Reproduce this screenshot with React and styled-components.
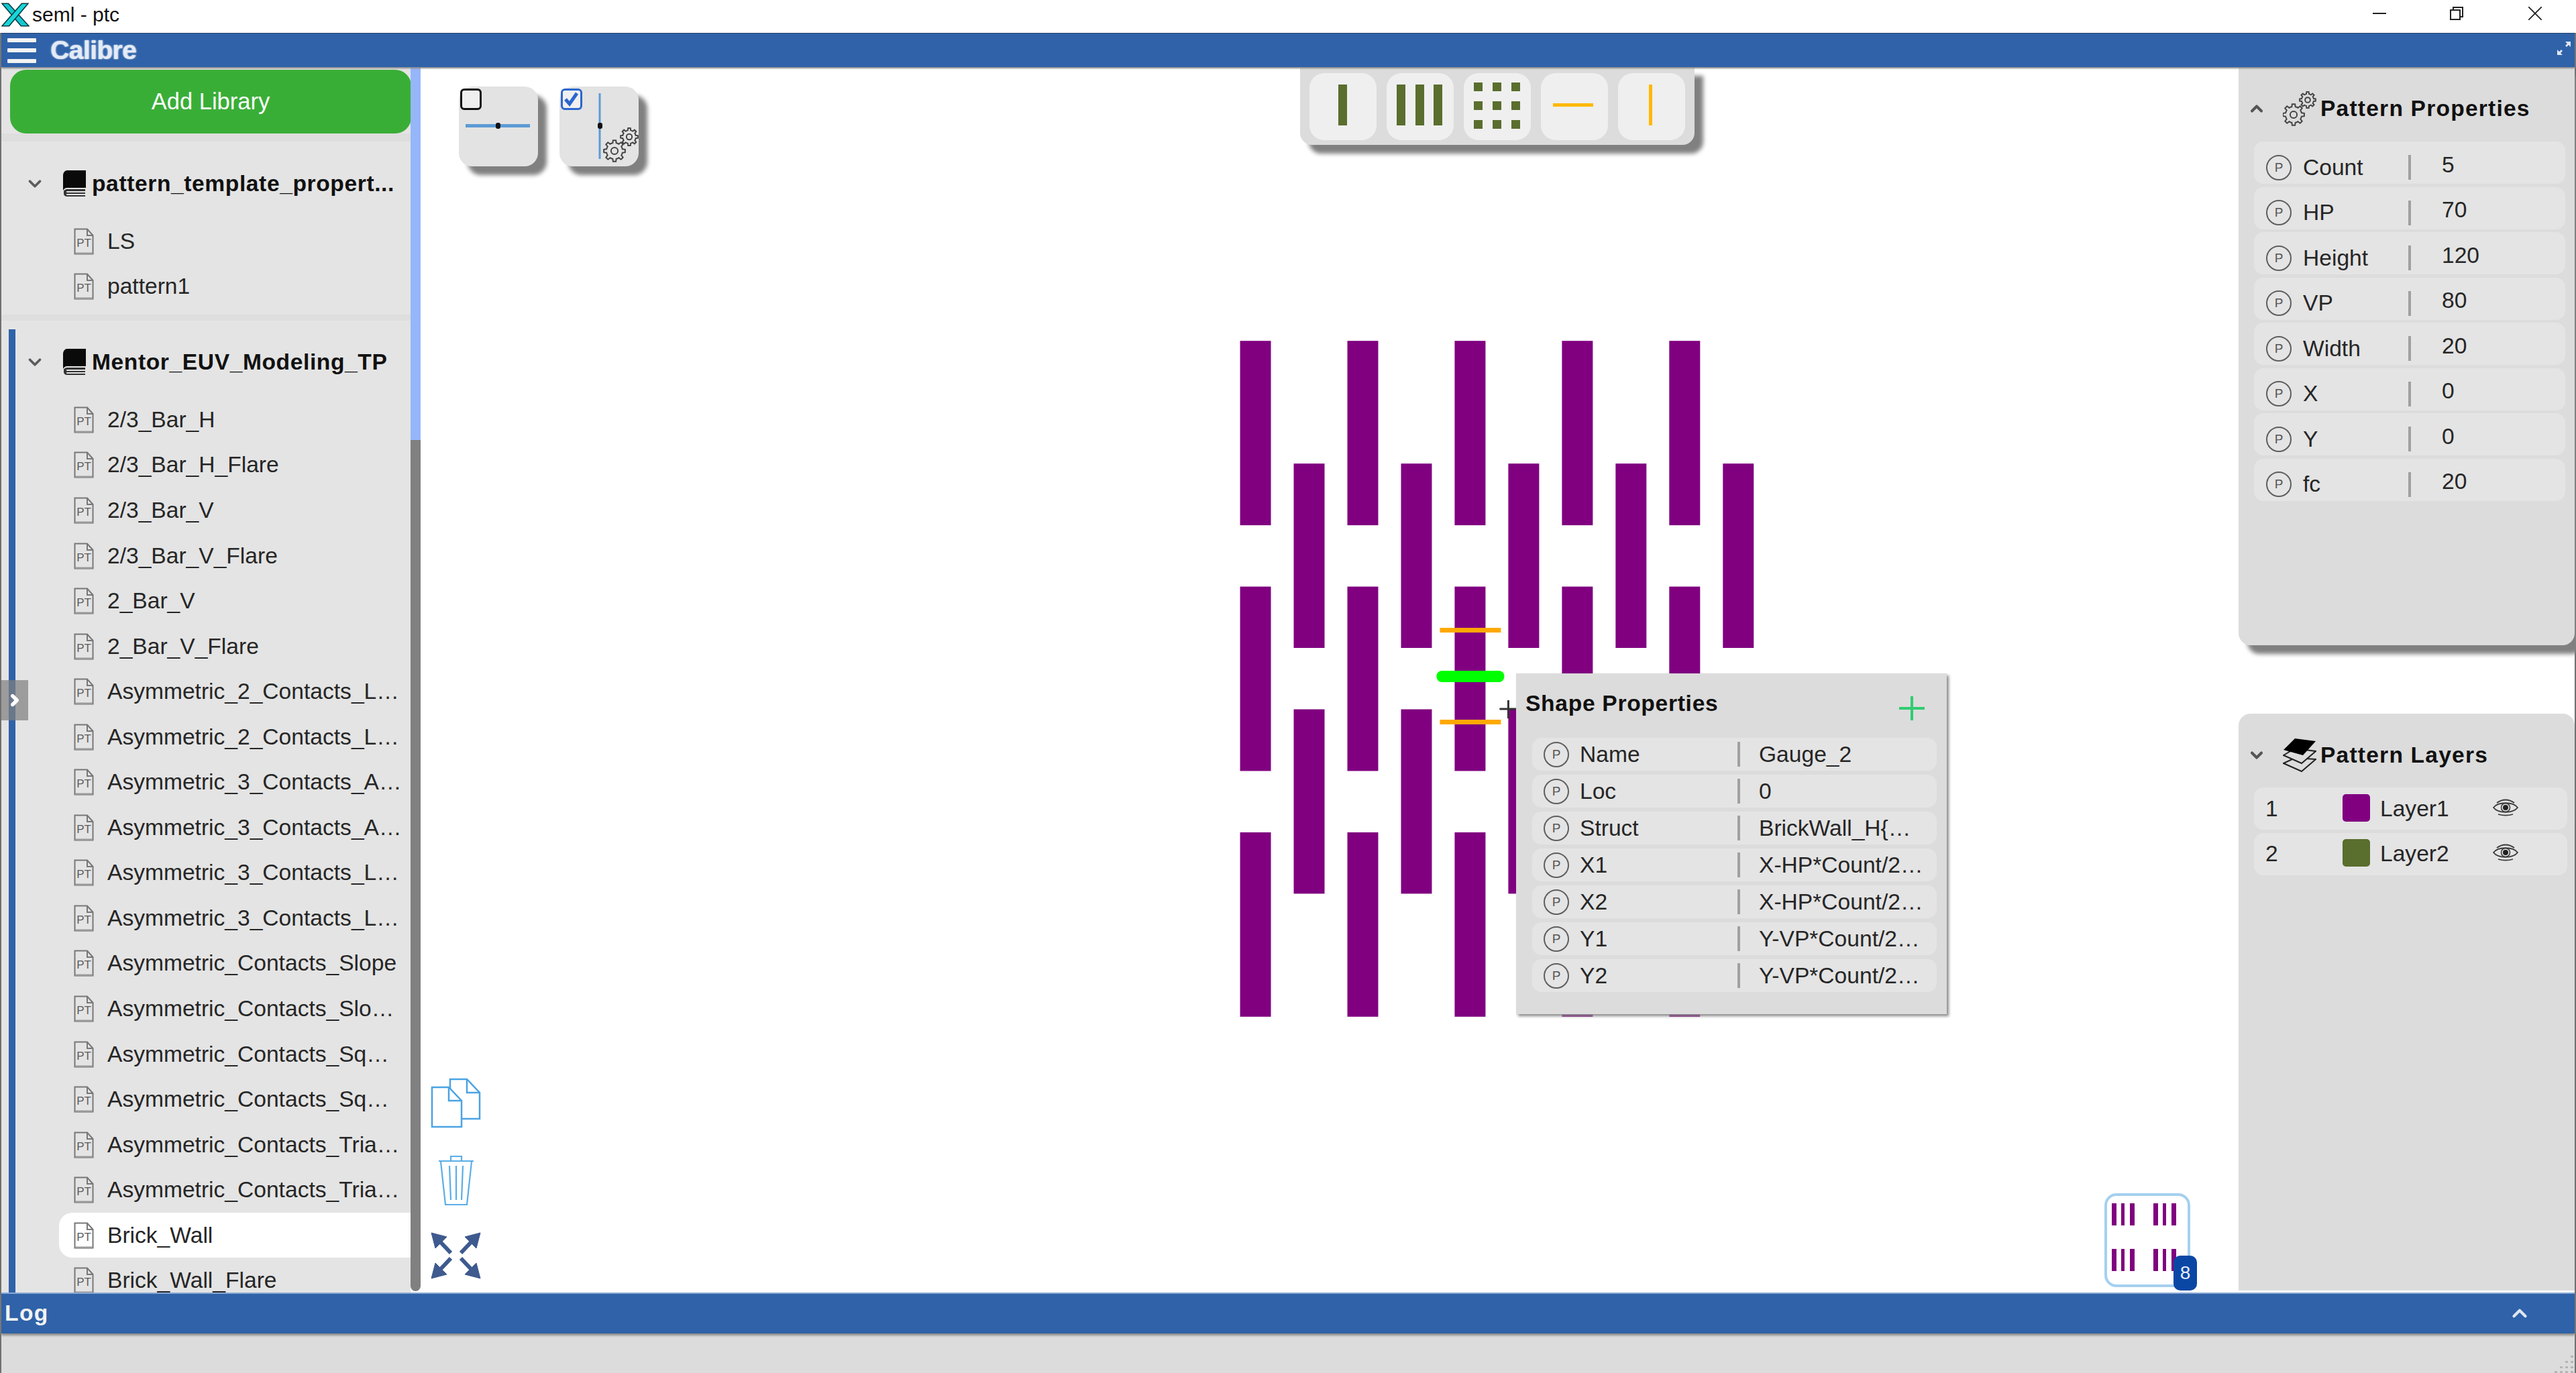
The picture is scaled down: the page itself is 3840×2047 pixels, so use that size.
import React from "react";
import styled, { createGlobalStyle, css } from "styled-components";
import { ChevronDown, ChevronUp, ChevronRight } from "lucide-react";

const GlobalStyle = createGlobalStyle`
  html, body {
    margin: 0;
    padding: 0;
    background: #fff;
    overflow: hidden;
  }
  * {
    box-sizing: border-box;
  }
  body {
    font-family: "Liberation Sans", Arial, sans-serif;
    font-size: 33.6px;
    color: #262626;
  }
`;

const Page = styled.div`
  width: 3840px;
  height: 2047px;
  display: flex;
  flex-direction: column;
  overflow: hidden;
`;

const TitleBar = styled.div`
  height: 49px;
  flex: none;
  display: flex;
  align-items: center;
  background: #fff;
  padding: 0 0 5px 2px;
`;

const WindowTitle = styled.span`
  font-size: 30px;
  margin-left: 4px;
  color: #111;
`;

const WindowControls = styled.div`
  margin-left: auto;
  display: flex;
  align-items: center;
  color: #222;
  padding-right: 51px;
  padding-bottom: 4px;
`;

const WindowButton = styled.div`
  width: 20px;
  height: 20px;
  margin-left: ${({ $gap }) => $gap}px;
  display: flex;
`;

const Frame = styled.div`
  flex: 1;
  min-height: 0;
  display: flex;
  flex-direction: column;
  border-left: 2px solid #707070;
  border-right: 2px solid #707070;
`;

const AppBar = styled.div`
  height: 51px;
  flex: none;
  background: #2f62a8;
  border-top: 1px solid #1d4173;
  box-shadow: 0 2px 2px #8a8a8a;
  position: relative;
  z-index: 3;
  display: flex;
  align-items: center;
  padding-left: 9px;
  padding-right: 5px;
`;

const Hamburger = styled.div`
  width: 43px;
  height: 37px;
  display: flex;
  flex-direction: column;
  justify-content: space-between;
  span {
    height: 6px;
    background: #f3f3f3;
    border-radius: 1px;
  }
`;

const Logo = styled.span`
  margin-left: 21px;
  font-size: 39px;
  font-weight: 700;
  letter-spacing: -0.6px;
  color: #e4ebf6;
  text-shadow: 1px 0 2px #c5d3e8, -1px 0 2px #7d9dcc;
`;

const FullScreen = styled.svg`
  margin-left: auto;
  width: 22px;
  height: 22px;
  margin-bottom: 6px;
`;

const Body = styled.div`
  height: 1827px;
  flex: none;
  display: flex;
`;

const Sidebar = styled.div`
  width: 625px;
  flex: none;
  display: flex;
  position: relative;
`;

const Tree = styled.div`
  flex: 1;
  min-width: 0;
  background: #e4e4e4;
  overflow: hidden;
`;

const AddSection = styled.div`
  height: 111px;
  background: #e4e4e4;
  border-bottom: 12px solid #dedede;
  padding: 4px 0 0 13px;
`;

const AddButton = styled.button`
  width: 598px;
  height: 95px;
  border: 0;
  border-radius: 24px;
  background: #39ae37;
  color: #fff;
  font-family: inherit;
  font-size: 34.5px;
`;

const LibraryBlock = styled.div`
  position: relative;
  padding-top: ${({ $top }) => $top}px;
  padding-bottom: ${({ $bottom }) => $bottom}px;
  ${({ $active }) =>
    $active &&
    css`
      &::before {
        content: "";
        position: absolute;
        left: 11px;
        top: 13px;
        bottom: 0;
        width: 10px;
        background: #2f62a8;
      }
    `}
`;

const Divider = styled.div`
  height: 9px;
  background: #dedede;
`;

const LibraryHeader = styled.div`
  height: 68px;
  margin-bottom: 18px;
  display: flex;
  align-items: center;
  padding-left: 35px;
  font-weight: 700;
  letter-spacing: 0.6px;
  color: #111;
  white-space: nowrap;
`;

const HeaderChevron = styled.span`
  width: 57px;
  display: flex;
  color: #5c5c5c;
`;

const BookIcon = styled.svg`
  width: 36px;
  height: 40px;
  margin-right: 7px;
  flex: none;
`;

const PatternRow = styled.div`
  height: 67.56px;
  margin-left: 86px;
  padding-left: 22px;
  display: flex;
  align-items: center;
  gap: 20px;
  white-space: nowrap;
  border-radius: 20px 0 0 20px;
  background: ${({ $selected }) => ($selected ? "#fff" : "transparent")};
`;

const FileIcon = styled.svg`
  width: 30px;
  height: 40px;
  flex: none;
`;

const ScrollTrack = styled.div`
  width: 15px;
  flex: none;
  display: flex;
  flex-direction: column;
  padding-bottom: 2px;
`;

const ScrollThumb = styled.div`
  height: 556px;
  background: #96b6fa;
`;

const ScrollRest = styled.div`
  flex: 1;
  background: #808080;
  border-radius: 0 0 8px 8px;
`;

const ExpandTab = styled.div`
  position: absolute;
  left: 0;
  top: 914px;
  width: 40px;
  height: 60px;
  background: rgba(128, 128, 128, 0.72);
  display: flex;
  align-items: center;
  justify-content: center;
  color: #fff;
`;

const Canvas = styled.div`
  flex: 1;
  min-width: 0;
  position: relative;
  background: #fff;
`;

const PatternLayer = styled.svg`
  position: absolute;
  left: 0;
  top: 0;
  width: 100%;
  height: 100%;
`;

const FloatGroup = styled.div`
  position: absolute;
  left: 57px;
  top: 29px;
  display: flex;
  gap: 32px;
`;

const FloatCard = styled.div`
  position: relative;
  width: 118px;
  height: 119px;
  border-radius: 20px;
  background: #e3e3e3;
  box-shadow: 13px 13px 6px #808080;
`;

const Check = styled.div`
  position: absolute;
  left: 2px;
  top: 3px;
  width: 32px;
  height: 32px;
  border-radius: 6px;
  border: 3px solid ${({ $checked }) => ($checked ? "#2b66cf" : "#111")};
  background: #efefef;
  display: flex;
`;

const FloatDrawing = styled.svg`
  width: 118px;
  height: 119px;
`;

const Toolbar = styled.div`
  position: absolute;
  left: 1311px;
  top: 0;
  height: 116px;
  padding: 9px 14px 0;
  display: flex;
  gap: 15px;
  background: #dcdcdc;
  border-radius: 0 0 18px 18px;
  box-shadow: 13px 13px 6px #808080;
`;

const ToolButton = styled.div`
  width: 100px;
  height: 100px;
  border-radius: 22px;
  background: #efefef;
  display: flex;
`;

const SideTools = styled.div`
  position: absolute;
  left: 15px;
  top: 1507px;
  display: flex;
  flex-direction: column;
  align-items: center;
  width: 75px;
  gap: 40px;
`;

const Thumbnail = styled.div`
  position: absolute;
  left: 2510px;
  top: 1679px;
  width: 128px;
  height: 140px;
  border: 4px solid #a4d0f0;
  border-radius: 18px;
  background: #fff;
`;

const Badge = styled.div`
  position: absolute;
  right: -14px;
  bottom: -9px;
  width: 35px;
  height: 52px;
  border-radius: 10px;
  background: #0a47a5;
  color: #e8eef8;
  font-size: 28px;
  display: flex;
  align-items: center;
  justify-content: center;
`;

const Popup = styled.div`
  position: absolute;
  left: 1633px;
  top: 904px;
  width: 642px;
  height: 508px;
  background: #dcdcdc;
  box-shadow: 3px 3px 4px #8a8a8a;
  padding: 0 15px 0 14px;
`;

const PopupHeader = styled.div`
  height: 96px;
  padding-bottom: 6px;
  display: flex;
  align-items: center;
  justify-content: space-between;
`;

const HeaderTitle = styled.span`
  font-weight: 700;
  letter-spacing: ${({ $tight }) => ($tight ? "0.7px" : "1.2px")};
  color: #111;
  white-space: nowrap;
`;

const PlusIcon = styled.svg`
  width: 38px;
  height: 36px;
  margin-right: 18px;
  margin-top: 14px;
`;

const PropList = styled.div`
  display: flex;
  flex-direction: column;
  gap: ${({ $compact }) => ($compact ? "6px" : "4.5px")};
  margin: ${({ $compact }) => ($compact ? "0 0 0 10px" : "1px 14px 0 23px")};
`;

const PropRow = styled.div`
  display: flex;
  align-items: center;
  border-radius: 14px;
  background: #e4e4e4;
  white-space: nowrap;
  ${({ $compact }) =>
    $compact
      ? css`
          height: 49px;
          padding-left: 17px;
        `
      : css`
          height: 63px;
          padding-left: 18px;
          padding-top: 14px;
        `}
`;

const ParamBadge = styled.span`
  width: 38px;
  height: 38px;
  flex: none;
  border-radius: 50%;
  border: 2px solid #5e5e5e;
  color: #555;
  font-size: 19px;
  display: flex;
  align-items: center;
  justify-content: center;
`;

const PropName = styled.span`
  width: ${({ $compact }) => ($compact ? "235px" : "157px")};
  margin-left: ${({ $compact }) => ($compact ? "16px" : "17px")};
`;

const PropSep = styled.span`
  width: 4px;
  height: 37px;
  flex: none;
  background: #a0a0a0;
`;

const PropValue = styled.span`
  margin-left: ${({ $compact }) => ($compact ? "28px" : "46px")};
  padding-bottom: ${({ $compact }) => ($compact ? "0" : "8px")};
`;

const RightColumn = styled.div`
  width: 501px;
  flex: none;
  display: flex;
  flex-direction: column;
`;

const Panel = styled.div`
  background: #dcdcdc;
  ${({ $upper }) =>
    $upper
      ? css`
          height: 862px;
          flex: none;
          border-radius: 0 0 18px 18px;
          box-shadow: 13px 13px 6px #808080;
          position: relative;
          z-index: 1;
        `
      : css`
          flex: 1;
          margin-top: 102px;
          margin-bottom: 3px;
          border-radius: 18px 18px 0 0;
        `}
`;

const PanelHeader = styled.div`
  height: 110px;
  padding-top: 14px;
  padding-left: 13px;
  display: flex;
  align-items: center;
`;

const PanelChevron = styled.span`
  width: 28px;
  margin-right: 25px;
  display: flex;
  color: #555;
`;

const PanelIcon = styled.svg`
  width: 50px;
  height: 52px;
  margin-right: 6px;
  flex: none;
`;

const LayerList = styled.div`
  display: flex;
  flex-direction: column;
  gap: 4.5px;
  margin: 0 11px 0 23px;
`;

const LayerRow = styled.div`
  height: 63px;
  padding-left: 17px;
  display: flex;
  align-items: center;
  border-radius: 14px;
  background: #e4e4e4;
`;

const LayerIndex = styled.span`
  width: 115px;
`;

const LayerSwatch = styled.span`
  width: 41px;
  height: 41px;
  border-radius: 5px;
  background: ${({ $color }) => $color};
  margin-right: 15px;
  margin-bottom: 3px;
`;

const LayerName = styled.span`
  width: 168px;
`;

const EyeIcon = styled.svg`
  width: 38px;
  height: 26px;
  margin-bottom: 4px;
`;

const LogBar = styled.div`
  height: 61px;
  flex: none;
  background: #2f62a8;
  border-top: 2px solid #8aa8d4;
  box-shadow: 0 3px 3px #8a8a8a;
  position: relative;
  z-index: 2;
  display: flex;
  align-items: center;
  justify-content: space-between;
  padding: 0 65px 2px 5px;
  color: #f2f2f2;
  font-weight: 700;
  letter-spacing: 1.4px;
`;

const LogBody = styled.div`
  flex: 1;
  background: #dcdcdc;
  position: relative;
`;

const Grip = styled.svg`
  position: absolute;
  right: 0;
  bottom: 0;
  width: 30px;
  height: 30px;
`;

const libraryOne = ["LS", "pattern1"];

const libraryTwo = [
  "2/3_Bar_H",
  "2/3_Bar_H_Flare",
  "2/3_Bar_V",
  "2/3_Bar_V_Flare",
  "2_Bar_V",
  "2_Bar_V_Flare",
  "Asymmetric_2_Contacts_L…",
  "Asymmetric_2_Contacts_L…",
  "Asymmetric_3_Contacts_A…",
  "Asymmetric_3_Contacts_A…",
  "Asymmetric_3_Contacts_L…",
  "Asymmetric_3_Contacts_L…",
  "Asymmetric_Contacts_Slope",
  "Asymmetric_Contacts_Slo…",
  "Asymmetric_Contacts_Sq…",
  "Asymmetric_Contacts_Sq…",
  "Asymmetric_Contacts_Tria…",
  "Asymmetric_Contacts_Tria…",
  "Brick_Wall",
  "Brick_Wall_Flare",
];

const patternProps = [
  ["Count", "5"],
  ["HP", "70"],
  ["Height", "120"],
  ["VP", "80"],
  ["Width", "20"],
  ["X", "0"],
  ["Y", "0"],
  ["fc", "20"],
];

const shapeProps = [
  ["Name", "Gauge_2"],
  ["Loc", "0"],
  ["Struct", "BrickWall_H{…"],
  ["X1", "X-HP*Count/2…"],
  ["X2", "X-HP*Count/2…"],
  ["Y1", "Y-VP*Count/2…"],
  ["Y2", "Y-VP*Count/2…"],
];

const PURPLE = "#800080";
const GREEN = "#5a6e2e";
const AMBER = "#ffb900";

const upperBars = [];
[0, 1, 2].forEach((r) => {
  [0, 1, 2, 3, 4].forEach((c) => {
    upperBars.push({ x: 1849 + c * 160, y: 508 + r * 366.5 });
  });
});
[0, 1].forEach((r) => {
  [0, 1, 2, 3, 4].forEach((c) => {
    upperBars.push({ x: 1929 + c * 160, y: 691 + r * 366.5 });
  });
});

// outline gear, teeth computed around a circle
function gearPath(cx, cy, outer, inner, teeth) {
  const step = (Math.PI * 2) / teeth;
  let d = "";
  for (let i = 0; i < teeth; i++) {
    const a = i * step;
    const pts = [
      [inner, a - step * 0.5],
      [inner, a - step * 0.28],
      [outer, a - step * 0.17],
      [outer, a + step * 0.17],
      [inner, a + step * 0.28],
    ];
    pts.forEach(([r, t], j) => {
      const x = (cx + r * Math.cos(t)).toFixed(2);
      const y = (cy + r * Math.sin(t)).toFixed(2);
      d += `${i === 0 && j === 0 ? "M" : "L"}${x} ${y} `;
    });
  }
  return d + "Z";
}

function Gear({ cx, cy, r }) {
  return (
    <g fill="none" stroke="#444" strokeWidth="2">
      <path d={gearPath(cx, cy, r, r * 0.76, 8)} />
      <circle cx={cx} cy={cy} r={r * 0.32} />
    </g>
  );
}

function AppMark() {
  return (
    <svg width="42" height="36" viewBox="0 0 40 34">
      <path d="M1 1 L10 1 L39 33 L28 33 Z" fill="#12c8d0" stroke="#083a40" strokeWidth="1.5" />
      <path d="M38 1 L29 1 L1 33 L11 33 Z" fill="#18d6d8" stroke="#083a40" strokeWidth="1.5" />
    </svg>
  );
}

function Book() {
  return (
    <BookIcon viewBox="0 0 36 40">
      <path d="M6 0 H34 V26 H6 C3 26 1 28 0 30 V8 C0 3 3 0 6 0 Z" fill="#0a0a0a" />
      <path d="M1 32 C1 29 4 28 7 28 H33 V31 H7 C4 31 4 33 7 33 H33 V35 H7 C4 35 4 37 7 37 H33 V39 H6 C3 39 1 37 1 35 Z" fill="#333" />
    </BookIcon>
  );
}

function PtFile() {
  return (
    <FileIcon viewBox="0 0 30 40">
      <path d="M1.5 1.5 H20 L28.5 11 V38.5 H1.5 Z" fill="none" stroke="#777" strokeWidth="2" />
      <path d="M20 1.5 V11 H28.5" fill="none" stroke="#777" strokeWidth="2" />
      <path d="M2 38 H28" stroke="#999" strokeWidth="3" />
      <text x="15" y="28" fontSize="17" textAnchor="middle" fill="#5c5c5c" fontFamily="Liberation Sans, sans-serif">PT</text>
    </FileIcon>
  );
}

function Eye() {
  return (
    <EyeIcon viewBox="0 0 38 26">
      <g fill="none" stroke="#3a3a3a" strokeWidth="1.8">
        <path d="M1 13 C8 4 30 4 37 13 C30 22 8 22 1 13 Z" />
        <path d="M6 6 C14 0 24 0 32 6" />
        <path d="M8 23 C15 25 23 25 30 23" />
      </g>
      <circle cx="19" cy="13" r="6.5" fill="none" stroke="#3a3a3a" strokeWidth="1.5" />
      <circle cx="19" cy="13" r="4" fill="#222" />
    </EyeIcon>
  );
}

function ToolGlyph({ children }) {
  return (
    <ToolButton>
      <svg width="100" height="100" viewBox="0 0 100 100">{children}</svg>
    </ToolButton>
  );
}

function PropertyRows({ rows, compact }) {
  return (
    <PropList $compact={compact}>
      {rows.map(([name, value]) => (
        <PropRow key={name} $compact={compact}>
          <ParamBadge>P</ParamBadge>
          <PropName $compact={compact}>{name}</PropName>
          <PropSep />
          <PropValue $compact={compact}>{value}</PropValue>
        </PropRow>
      ))}
    </PropList>
  );
}

function ExpandArrows() {
  return (
    <svg width="75" height="70" viewBox="0 0 75 70">
      {[
        "",
        "translate(75 0) scale(-1 1)",
        "translate(0 70) scale(1 -1)",
        "translate(75 70) scale(-1 -1)",
      ].map((t) => (
        <g key={t} transform={t} fill="#3e5a8e" stroke="#3e5a8e">
          <path d="M1 1 L24 7 L7 24 Z" />
          <path d="M12 12 L30 31" strokeWidth="6" />
        </g>
      ))}
    </svg>
  );
}

export default function App() {
  return (
    <Page>
      <GlobalStyle />
      <TitleBar>
        <AppMark />
        <WindowTitle>seml - ptc</WindowTitle>
        <WindowControls>
          <WindowButton $gap={0}>
            <svg width="20" height="20" viewBox="0 0 20 20">
              <path d="M0 10 H20" stroke="#222" strokeWidth="2" />
            </svg>
          </WindowButton>
          <WindowButton $gap={95}>
            <svg width="20" height="20" viewBox="0 0 20 20" fill="none" stroke="#222" strokeWidth="2">
              <rect x="1" y="5" width="14" height="14" />
              <path d="M5 5 V1 H19 V15 H15" />
            </svg>
          </WindowButton>
          <WindowButton $gap={97}>
            <svg width="20" height="20" viewBox="0 0 20 20">
              <path d="M0 0 L20 20 M20 0 L0 20" stroke="#222" strokeWidth="1.8" />
            </svg>
          </WindowButton>
        </WindowControls>
      </TitleBar>

      <Frame>
        <AppBar>
          <Hamburger>
            <span />
            <span />
            <span />
          </Hamburger>
          <Logo>Calibre</Logo>
          <FullScreen viewBox="0 0 22 22">
            <path d="M13 1 H21 V9 L18 6 L15 9 L13 7 L16 4 Z" fill="#dfe7f3" />
            <path d="M9 21 H1 V13 L4 16 L7 13 L9 15 L6 18 Z" fill="#dfe7f3" />
          </FullScreen>
        </AppBar>

        <Body>
          <Sidebar>
            <Tree>
              <AddSection>
                <AddButton>Add Library</AddButton>
              </AddSection>
              <LibraryBlock $top={29} $bottom={8}>
                <LibraryHeader>
                  <HeaderChevron>
                    <ChevronDown size={30} strokeWidth={3} />
                  </HeaderChevron>
                  <Book />
                  pattern_template_propert...
                </LibraryHeader>
                {libraryOne.map((name) => (
                  <PatternRow key={name}>
                    <PtFile />
                    {name}
                  </PatternRow>
                ))}
              </LibraryBlock>
              <Divider />
              <LibraryBlock $top={28} $bottom={10} $active>
                <LibraryHeader>
                  <HeaderChevron>
                    <ChevronDown size={30} strokeWidth={3} />
                  </HeaderChevron>
                  <Book />
                  Mentor_EUV_Modeling_TP
                </LibraryHeader>
                {libraryTwo.map((name, i) => (
                  <PatternRow key={name + i} $selected={name === "Brick_Wall"}>
                    <PtFile />
                    {name}
                  </PatternRow>
                ))}
              </LibraryBlock>
            </Tree>
            <ScrollTrack>
              <ScrollThumb />
              <ScrollRest />
            </ScrollTrack>
            <ExpandTab>
              <ChevronRight size={26} strokeWidth={5} />
            </ExpandTab>
          </Sidebar>

          <Canvas>
            <PatternLayer viewBox="627 100 2711 1827">
              {upperBars.map((b) => (
                <rect key={`${b.x}-${b.y}`} x={b.x} y={b.y} width="46" height="275" fill={PURPLE} />
              ))}
              <rect x="2147" y="936" width="91" height="7" fill="#ffa800" />
              <rect x="2147" y="1073" width="91" height="7" fill="#ffa800" />
              <rect x="2142" y="1000" width="101" height="17" rx="8" fill="#00ff00" />
              <path d="M2236 1057 H2262 M2249 1044 V1071" stroke="#333" strokeWidth="3" />
            </PatternLayer>

            <FloatGroup>
              <FloatCard>
                <Check />
                <FloatDrawing viewBox="0 0 118 119">
                  <path d="M10 58.5 H106" stroke="#5b9bd5" strokeWidth="5" />
                  <rect x="55" y="54" width="7" height="9" rx="3" fill="#111" />
                </FloatDrawing>
              </FloatCard>
              <FloatCard>
                <Check $checked>
                  <svg width="26" height="26" viewBox="0 0 26 26">
                    <path d="M4 13 L10 20 L21 4" fill="none" stroke="#2b66cf" strokeWidth="5" />
                  </svg>
                </Check>
                <FloatDrawing viewBox="0 0 118 119">
                  <path d="M60 10 V108" stroke="#5b9bd5" strokeWidth="3" />
                  <rect x="57" y="54" width="7" height="9" rx="3" fill="#111" />
                  <Gear cx={104} cy={75} r={13} />
                  <Gear cx={82} cy={96} r={16} />
                </FloatDrawing>
              </FloatCard>
            </FloatGroup>

            <Toolbar>
              <ToolGlyph>
                <rect x="43" y="17" width="13" height="61" fill={GREEN} />
              </ToolGlyph>
              <ToolGlyph>
                {[15, 43, 70].map((x) => (
                  <rect key={x} x={x} y="17" width="13" height="61" fill={GREEN} />
                ))}
              </ToolGlyph>
              <ToolGlyph>
                {[15, 43, 71].map((x) =>
                  [14, 42, 70].map((y) => (
                    <rect key={`${x}-${y}`} x={x} y={y} width="13" height="13" fill={GREEN} />
                  ))
                )}
              </ToolGlyph>
              <ToolGlyph>
                <rect x="18" y="45" width="60" height="5" fill={AMBER} />
              </ToolGlyph>
              <ToolGlyph>
                <rect x="46" y="17" width="5" height="61" fill={AMBER} />
              </ToolGlyph>
            </Toolbar>

            <SideTools>
              <svg width="75" height="75" viewBox="0 0 75 75" fill="#fff" stroke="#4ba3e3" strokeWidth="2.5">
                <path d="M29 2 H54 L73 22 V61 H29 Z" />
                <path d="M54 2 V22 H73" fill="none" />
                <path d="M2 14 H27 L46 34 V73 H2 Z" />
                <path d="M27 14 V34 H46" fill="none" />
              </svg>
              <svg width="54" height="75" viewBox="0 0 54 75" fill="none" stroke="#5aaee6" strokeWidth="2.2">
                <path d="M1 9 H53 M19 8 V2 H35 V8" />
                <path d="M4 10 L11 74 H43 L50 10" />
                <path d="M17 16 L19 67 M27 16 V67 M37 16 L35 67" />
              </svg>
              <ExpandArrows />
            </SideTools>

            <Thumbnail>
              <svg width="120" height="132" viewBox="0 0 120 132">
                {[7, 21, 34, 69, 83, 96].map((x, i) =>
                  [11, 79].map((y) => (
                    <rect key={`${x}-${y}`} x={x} y={y} width={i % 3 === 1 ? 5 : 7} height="33" fill={PURPLE} />
                  ))
                )}
              </svg>
              <Badge>8</Badge>
            </Thumbnail>

            <Popup>
              <PopupHeader>
                <HeaderTitle $tight>Shape Properties</HeaderTitle>
                <PlusIcon viewBox="0 0 38 36">
                  <path d="M0 18 H38 M19 0 V36" stroke="#2ecc71" strokeWidth="4" />
                </PlusIcon>
              </PopupHeader>
              <PropertyRows rows={shapeProps} compact />
            </Popup>
          </Canvas>

          <RightColumn>
            <Panel $upper>
              <PanelHeader>
                <PanelChevron>
                  <ChevronUp size={28} strokeWidth={3.5} />
                </PanelChevron>
                <PanelIcon viewBox="0 0 50 52">
                  <Gear cx={37} cy={13} r={12} />
                  <Gear cx={16} cy={35} r={16} />
                </PanelIcon>
                <HeaderTitle>Pattern Properties</HeaderTitle>
              </PanelHeader>
              <PropertyRows rows={patternProps} />
            </Panel>
            <Panel>
              <PanelHeader>
                <PanelChevron>
                  <ChevronDown size={28} strokeWidth={3.5} />
                </PanelChevron>
                <PanelIcon viewBox="0 0 50 52">
                  <path d="M1 38 L18 30 L49 32 L28 50 Z" fill="#dcdcdc" stroke="#222" strokeWidth="2" />
                  <path d="M1 26 L18 16 L49 20 L28 38 Z" fill="#dcdcdc" stroke="#222" strokeWidth="2" />
                  <path d="M1 18 L18 1 L49 5 L30 26 Z" fill="#000" />
                </PanelIcon>
                <HeaderTitle>Pattern Layers</HeaderTitle>
              </PanelHeader>
              <LayerList>
                <LayerRow>
                  <LayerIndex>1</LayerIndex>
                  <LayerSwatch $color={PURPLE} />
                  <LayerName>Layer1</LayerName>
                  <Eye />
                </LayerRow>
                <LayerRow>
                  <LayerIndex>2</LayerIndex>
                  <LayerSwatch $color={GREEN} />
                  <LayerName>Layer2</LayerName>
                  <Eye />
                </LayerRow>
              </LayerList>
            </Panel>
          </RightColumn>
        </Body>

        <LogBar>
          Log
          <ChevronUp size={34} strokeWidth={3} color="#dfe6f1" />
        </LogBar>
        <LogBody>
          <Grip viewBox="0 0 30 30">
            {[
              [24, 4],
              [16, 12],
              [24, 12],
              [8, 20],
              [16, 20],
              [24, 20],
              [0, 27],
              [8, 27],
              [16, 27],
              [24, 27],
            ].map(([x, y]) => (
              <rect key={`${x}-${y}`} x={x} y={y} width="4" height="3" fill="#b5b5b5" />
            ))}
          </Grip>
        </LogBody>
      </Frame>
    </Page>
  );
}
